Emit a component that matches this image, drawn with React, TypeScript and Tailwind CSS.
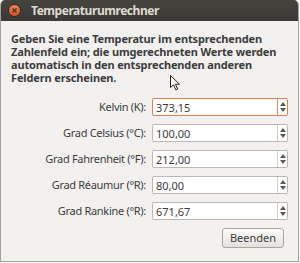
import React from "react";

const rows = [
  { label: "Kelvin (K):", value: "373,15", focus: true },
  { label: "Grad Celsius (°C):", value: "100,00" },
  { label: "Grad Fahrenheit (°F):", value: "212,00" },
  { label: "Grad Réaumur (°R):", value: "80,00" },
  { label: "Grad Rankine (°R):", value: "671,67" },
];

function Spin({ focus }: { focus?: boolean }) {
  return (
    <div
      className={
        "w-[10px] h-full flex flex-col items-center justify-center gap-[2px] border-l " +
        (focus ? "border-[#e58a62]" : "border-[#d3d0cb]")
      }
    >
      <svg width="6" height="4" viewBox="0 0 6 4">
        <path d="M3 0 L6 4 L0 4 Z" fill="#5a5955" />
      </svg>
      <svg width="6" height="4" viewBox="0 0 6 4">
        <path d="M0 0 L6 0 L3 4 Z" fill="#5a5955" />
      </svg>
    </div>
  );
}

export default function App() {
  return (
    <div
      className="w-[300px] h-[263px] bg-white relative"
      style={{ fontFamily: '"Noto Sans", "DejaVu Sans", sans-serif' }}
    >
      <div className="w-[299px] h-[262px] rounded-t-[5px] overflow-hidden flex flex-col bg-[#f2f1f0] border-x border-b border-[#a4a29e]">
        <div className="h-[21px] shrink-0 bg-gradient-to-b from-[#45443f] to-[#3a3935] flex items-center -mx-px">
          <div className="ml-[8px] w-[13px] h-[13px] rounded-full bg-gradient-to-b from-[#f5824f] to-[#db4d1b] flex items-center justify-center border border-[#2e2d2a]">
            <svg width="5" height="5" viewBox="0 0 5 5">
              <path d="M0.5 0.5 L4.5 4.5 M4.5 0.5 L0.5 4.5" stroke="#3c3b37" strokeWidth="1.3" />
            </svg>
          </div>
          <span className="ml-[10px] text-[12px] font-bold text-[#dfdbd2] leading-none tracking-[-0.45px]">
            Temperaturumrechner
          </span>
        </div>
        <div className="flex flex-col pl-[10px] pr-[10px] pt-[11px]">
          <p className="text-[11px] font-bold leading-[13px] text-[#3c3c3c] tracking-[-0.14px]">
            Geben Sie eine Temperatur im entsprechenden
            <br />
            Zahlenfeld ein; die umgerechneten Werte werden
            <br />
            automatisch in den entsprechenden anderen
            <br />
            Feldern erscheinen.
          </p>
          <div className="flex flex-col gap-[8px] mt-[14px]">
            {rows.map((r) => (
              <div key={r.label} className="flex justify-end items-center gap-[6px]">
                <span className="text-[11px] text-[#3c3c3c] tracking-[-0.3px]">{r.label}</span>
                <div
                  className={
                    "w-[136px] h-[18px] bg-white rounded-[2px] border flex items-stretch " +
                    (r.focus ? "border-[#e07f55]" : "border-[#bdb9b2]")
                  }
                >
                  <span className="flex-1 pl-[3px] text-[11px] text-[#3c3c3c] flex items-center leading-none">
                    {r.value}
                  </span>
                  <Spin focus={r.focus} />
                </div>
              </div>
            ))}
          </div>
          <div className="flex justify-end mt-[8px] pr-[4px]">
            <button className="w-[62px] h-[20px] rounded-[3px] border border-[#aaa69f] bg-gradient-to-b from-[#fbfbfa] to-[#e4e2de] text-[11px] text-[#3c3c3c] flex items-center justify-center">
              Beenden
            </button>
          </div>
        </div>
      </div>
      <svg
        className="absolute left-[170px] top-[75px]"
        width="11"
        height="16"
        viewBox="0 0 11 16"
      >
        <path
          d="M0.5 0.5 L0.5 12.5 L3.5 9.8 L5.8 14.8 L7.6 14 L5.4 9.2 L9.5 9.2 Z"
          fill="#ffffff"
          stroke="#222"
          strokeWidth="1"
          strokeLinejoin="round"
        />
      </svg>
    </div>
  );
}
